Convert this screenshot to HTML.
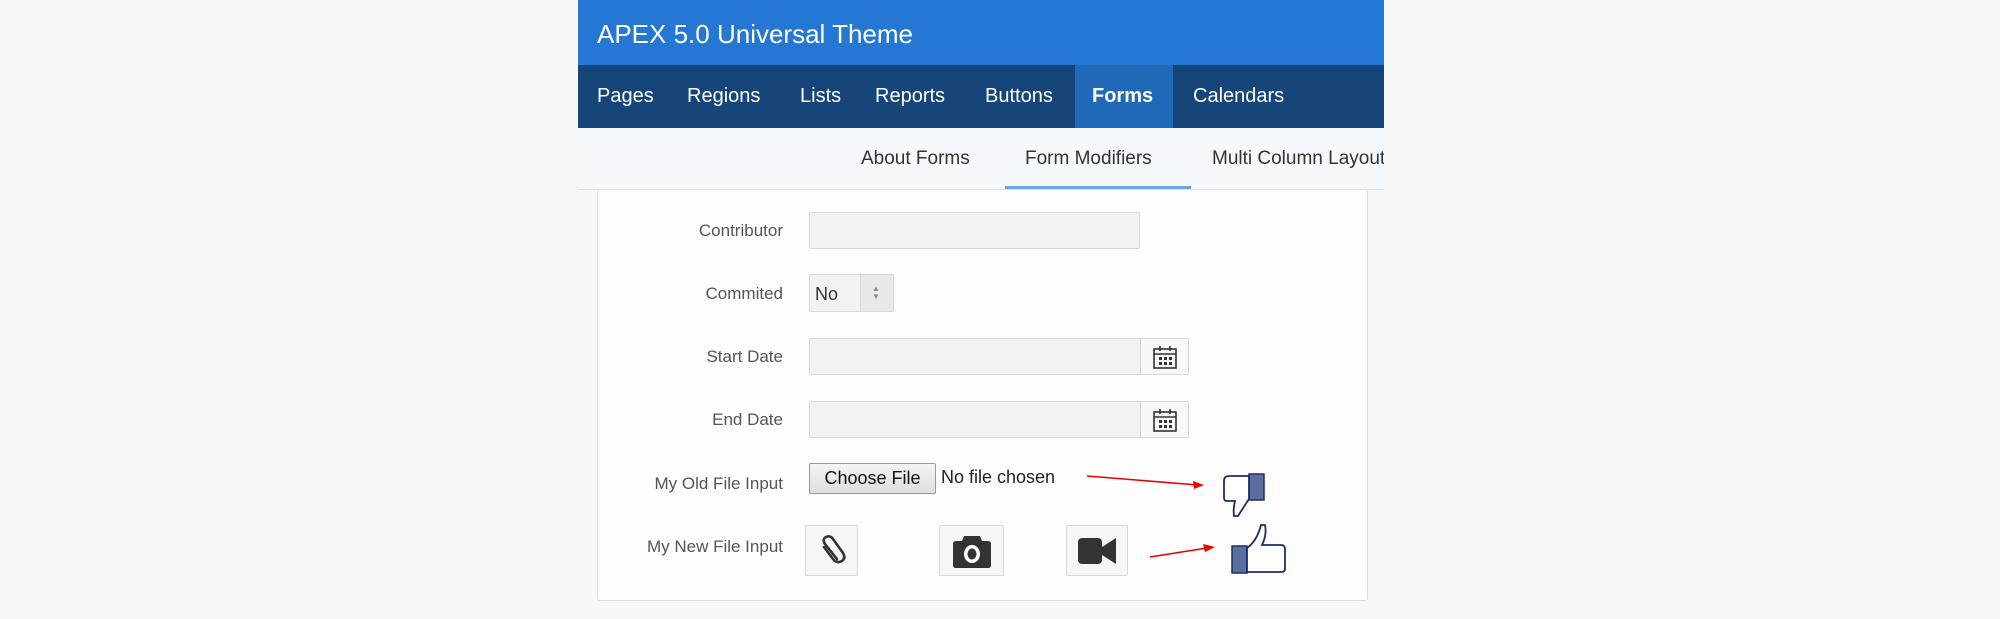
<!DOCTYPE html>
<html><head><meta charset="utf-8"><style>
*{margin:0;padding:0;box-sizing:border-box}
body{width:2000px;height:619px;background:#f8f8f8;position:relative;overflow:hidden;font-family:"Liberation Sans",sans-serif}
.a{position:absolute}
.hdr{left:578px;top:0;width:806px;height:65px;background:#2478d3;color:#fff;font-size:26px;padding:19px 0 0 19px}
.nav{left:578px;top:65px;width:806px;height:63px;background:#16457a}
.nav span{position:absolute;top:20px;color:#fff;font-size:20px}
.sub{left:578px;top:128px;width:806px;height:62px;background:#f5f8fc;border-bottom:1px solid #dde3ea;overflow:hidden}
.sub span{position:absolute;top:20px;color:#333;font-size:19px;white-space:nowrap}
.reg{left:597px;top:190px;width:771px;height:411px;background:#fdfdfd;border:1px solid #dcdcdc;border-top:none;border-radius:0 0 3px 3px}
.lbl{color:#555;font-size:17px;text-align:right;width:300px;left:483px}
.inp{background:#f2f2f2;border:1px solid #d8d8d8;border-radius:2px}
.cal{background:#f8f8f8;border:1px solid #d8d8d8;border-left:1px solid #d0d0d0;border-radius:0 2px 2px 0;width:49px}
.btn{background:#f6f6f6;border:1px solid #d8d8d8;border-radius:2px}
</style></head><body>
<div class="a hdr">APEX 5.0 Universal Theme</div>
<div class="a nav">
<div class="a" style="left:497px;top:0;width:98px;height:63px;background:#2068b8"></div>
<span style="left:19px">Pages</span><span style="left:109px">Regions</span><span style="left:222px">Lists</span><span style="left:297px">Reports</span><span style="left:407px">Buttons</span><span style="left:514px;font-weight:bold">Forms</span><span style="left:615px">Calendars</span>
</div>
<div class="a sub">
<span style="left:283px">About Forms</span><span style="left:447px">Form Modifiers</span><span style="left:634px">Multi Column Layouts</span>
<div class="a" style="left:427px;top:58px;width:186px;height:4px;background:#6aa7e4"></div>
</div>
<div class="a reg"></div>

<div class="a lbl" style="top:221px">Contributor</div>
<div class="a inp" style="left:809px;top:212px;width:331px;height:37px"></div>

<div class="a lbl" style="top:284px">Commited</div>
<div class="a inp" style="left:809px;top:274px;width:85px;height:38px"></div>
<div class="a" style="left:860px;top:275px;width:33px;height:36px;background:#e8e8e8;border-left:1px solid #d8d8d8"></div>
<div class="a" style="left:815px;top:284px;font-size:18px;color:#333">No</div>
<div class="a" style="left:872px;top:285px;font-size:8px;color:#888;line-height:8px">▲<br>▼</div>

<div class="a lbl" style="top:347px">Start Date</div>
<div class="a inp" style="left:809px;top:338px;width:380px;height:37px"></div>
<div class="a cal" style="left:1140px;top:338px;height:37px"></div>
<svg class="a" style="left:1152px;top:344px" width="26" height="26" viewBox="0 0 26 26"><rect x="2" y="5" width="22" height="19" fill="none" stroke="#333" stroke-width="1.6"/><line x1="2" y1="10" x2="24" y2="10" stroke="#333" stroke-width="1.6"/><line x1="8" y1="2" x2="8" y2="7" stroke="#333" stroke-width="1.6"/><line x1="18" y1="2" x2="18" y2="7" stroke="#333" stroke-width="1.6"/><g fill="#333"><rect x="7" y="13" width="3" height="3"/><rect x="12" y="13" width="3" height="3"/><rect x="17" y="13" width="3" height="3"/><rect x="7" y="18" width="3" height="3"/><rect x="12" y="18" width="3" height="3"/><rect x="17" y="18" width="3" height="3"/></g></svg>

<div class="a lbl" style="top:410px">End Date</div>
<div class="a inp" style="left:809px;top:401px;width:380px;height:37px"></div>
<div class="a cal" style="left:1140px;top:401px;height:37px"></div>
<svg class="a" style="left:1152px;top:407px" width="26" height="26" viewBox="0 0 26 26"><rect x="2" y="5" width="22" height="19" fill="none" stroke="#333" stroke-width="1.6"/><line x1="2" y1="10" x2="24" y2="10" stroke="#333" stroke-width="1.6"/><line x1="8" y1="2" x2="8" y2="7" stroke="#333" stroke-width="1.6"/><line x1="18" y1="2" x2="18" y2="7" stroke="#333" stroke-width="1.6"/><g fill="#333"><rect x="7" y="13" width="3" height="3"/><rect x="12" y="13" width="3" height="3"/><rect x="17" y="13" width="3" height="3"/><rect x="7" y="18" width="3" height="3"/><rect x="12" y="18" width="3" height="3"/><rect x="17" y="18" width="3" height="3"/></g></svg>

<div class="a lbl" style="top:474px">My Old File Input</div>
<div class="a" style="left:809px;top:463px;width:127px;height:31px;background:linear-gradient(#f4f4f4,#dedede);border:1px solid #999;border-radius:2px;font-size:18px;color:#111;text-align:center;line-height:29px">Choose File</div>
<div class="a" style="left:941px;top:467px;font-size:18px;color:#222">No file chosen</div>
<svg class="a" style="left:1080px;top:468px" width="140" height="24"><line x1="7" y1="8" x2="118" y2="17" stroke="#e00" stroke-width="1.6"/><path d="M124 17 L113 13 L114 21 Z" fill="#e00"/></svg>
<svg class="a" style="left:1221px;top:471px" width="48" height="47" viewBox="0 0 48 47"><rect x="28" y="3" width="15" height="26" fill="#5a6f9e" stroke="#1c2d6b" stroke-width="1.5"/><path d="M28 5 H8 Q3 5 3 10 V27 Q3 30 6 30 H14 Q12 38 13 45 H17 Q24 34 28 28 Z" fill="#fff" stroke="#1c2d6b" stroke-width="1.8"/></svg>

<div class="a lbl" style="top:537px">My New File Input</div>
<div class="a btn" style="left:805px;top:525px;width:53px;height:51px"></div>
<svg class="a" style="left:815px;top:532px" width="34" height="38" viewBox="0 0 34 38"><path d="M22 27 L10 12 Q7 7 11 5 Q15 3 18 7 L28 21 Q31 26 27 29 Q22 32 18 27 L9 15" fill="none" stroke="#333" stroke-width="2.6" stroke-linecap="round"/></svg>
<div class="a btn" style="left:939px;top:525px;width:65px;height:51px"></div>
<svg class="a" style="left:951px;top:531px" width="42" height="40" viewBox="0 0 42 40"><path d="M13 5 H29 L31 10 H37 Q40 10 40 13 V34 Q40 37 37 37 H5 Q2 37 2 34 V13 Q2 10 5 10 H11 Z" fill="#333"/><ellipse cx="21" cy="23" rx="8" ry="9" fill="#fff"/><ellipse cx="21" cy="23" rx="4.5" ry="5.5" fill="#333"/></svg>
<div class="a btn" style="left:1066px;top:525px;width:62px;height:51px"></div>
<svg class="a" style="left:1078px;top:537px" width="40" height="28" viewBox="0 0 40 28"><rect x="0" y="1" width="24" height="26" rx="4" fill="#333"/><path d="M24 10 L38 1 V27 L24 18 Z" fill="#333"/></svg>
<svg class="a" style="left:1145px;top:538px" width="80" height="24"><line x1="5" y1="19" x2="62" y2="10" stroke="#e00" stroke-width="1.6"/><path d="M70 9 L58 6 L60 14 Z" fill="#e00"/></svg>
<svg class="a" style="left:1231px;top:523px" width="58" height="57" viewBox="0 0 58 57"><rect x="1" y="23" width="15" height="27" fill="#5a6f9e" stroke="#1c2d6b" stroke-width="1.5"/><path d="M16 25 Q26 18 30 2 H34 Q36 12 31 22 H50 Q54 22 54 26 V46 Q54 49 50 49 H16 Z" fill="#fff" stroke="#1c2d6b" stroke-width="1.8"/></svg>
</body></html>
